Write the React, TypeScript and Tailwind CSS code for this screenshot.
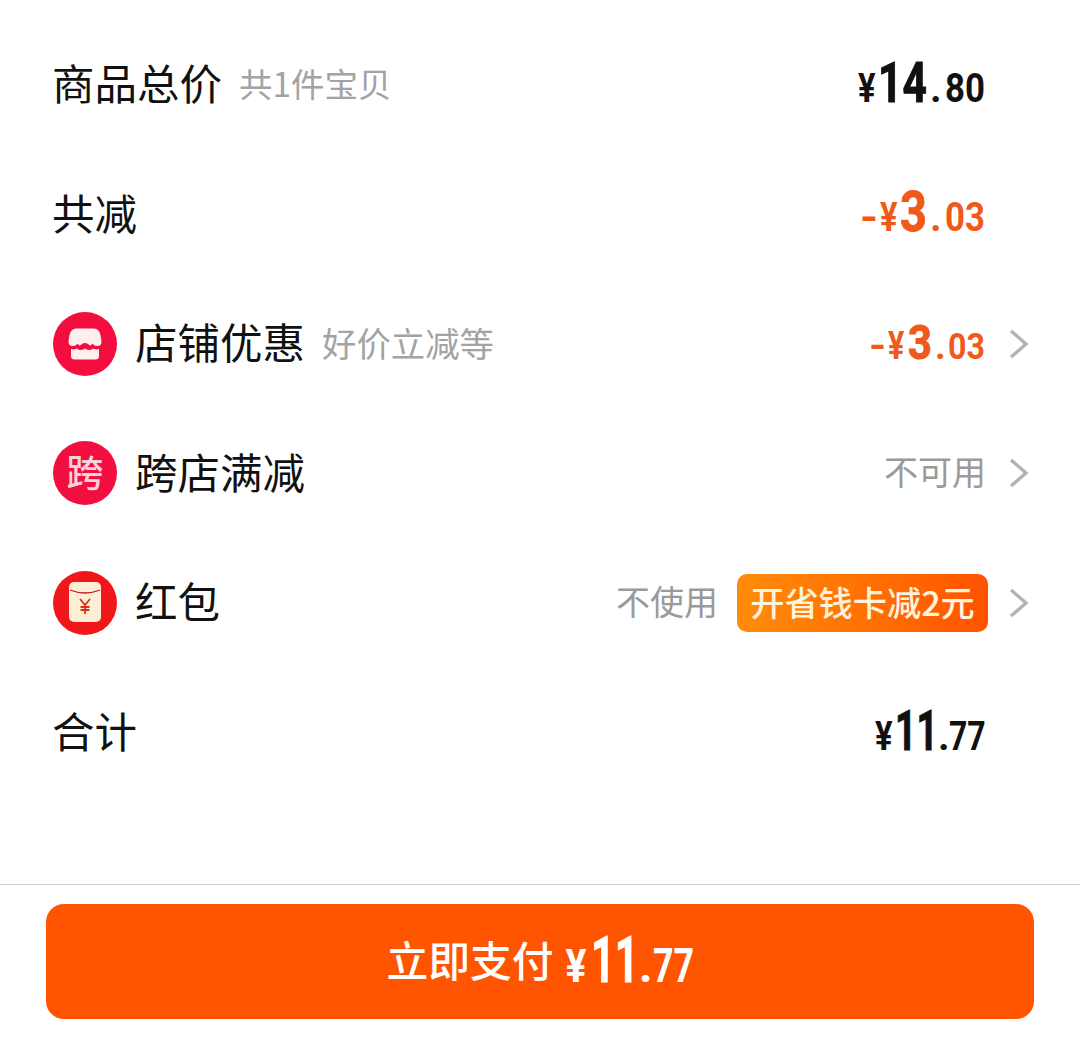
import type { ReactNode } from "react";

const CJK = "font-['Noto_Sans_CJK_SC','Noto_Sans',sans-serif]";
const NUM = "font-['Roboto',sans-serif]";

type Part = { text: string; cls: string };

// each glyph group sits in a fixed-width slot and gets squeezed, the app uses a condensed numeric face
function Price({ parts, color }: { parts: Part[]; color: string }) {
  return (
    <div className={`flex items-baseline pb-[3px] font-bold leading-none ${NUM} ${color}`}>
      {parts.map((part, index) => (
        <span key={index} className={`inline-block origin-left whitespace-nowrap ${part.cls}`}>
          {part.text}
        </span>
      ))}
    </div>
  );
}

const YEN = "w-[20px] text-[41px] scale-x-[0.8]";
const DOT = "w-[15px] text-[40px]";
const CENTS = "w-[40px] text-[40px] scale-x-[0.87]";
const HEAVY = "[-webkit-text-stroke:1px_currentColor]";

const TOTAL_PARTS: Part[] = [
  { text: "¥", cls: YEN },
  { text: "14", cls: `w-[52px] text-[56px] scale-x-[0.76] ${HEAVY}` },
  { text: ".", cls: DOT },
  { text: "80", cls: CENTS },
];

const CUT_PARTS: Part[] = [
  { text: "-", cls: "w-[20px] text-[40px] scale-x-[1.15]" },
  { text: "¥", cls: YEN },
  { text: "3", cls: `w-[30px] text-[55px] scale-x-[0.85] ${HEAVY}` },
  { text: ".", cls: DOT },
  { text: "03", cls: CENTS },
];

const SHOP_PARTS: Part[] = [
  { text: "-", cls: "w-[19px] text-[38px] scale-x-[1.15]" },
  { text: "¥", cls: "w-[20px] text-[38px] scale-x-[0.8]" },
  { text: "3", cls: `w-[27px] text-[49px] scale-x-[0.85] ${HEAVY}` },
  { text: ".", cls: "w-[13px] text-[37px]" },
  { text: "03", cls: "w-[38px] text-[37px] scale-x-[0.87]" },
];

const SUM_PARTS: Part[] = [
  { text: "¥", cls: YEN },
  { text: "11", cls: `w-[43px] text-[56px] scale-x-[0.67] ${HEAVY}` },
  { text: ".", cls: "w-[11px] text-[40px]" },
  { text: "77", cls: "w-[37px] text-[40px] scale-x-[0.8]" },
];

const PAY_PARTS: Part[] = [
  { text: "¥", cls: "w-[26px] text-[46px] scale-x-[0.85]" },
  { text: "11", cls: `w-[48px] text-[65px] scale-x-[0.64] ${HEAVY}` },
  { text: ".", cls: "w-[14px] text-[48px]" },
  { text: "77", cls: "w-[41px] text-[49px] scale-x-[0.73]" },
];

function Chevron() {
  return (
    <svg width="22" height="32" viewBox="0 0 22 32" fill="none" className="ml-[22px] shrink-0">
      <path d="M3 3 L18 16 L3 29" stroke="#b3b3b3" strokeWidth="3.4" />
    </svg>
  );
}

function ShopIcon() {
  return (
    <div className="flex h-16 w-16 shrink-0 items-center justify-center rounded-full bg-[#f20f3f]">
      <svg width="34" height="32" viewBox="0 0 34 32">
        <path d="M8 0.5 H26 Q31 0.5 32.5 7 L33.5 13 Q34 18 29 18 Q26 18 24.5 15.5 Q22.5 19 20 16 Q17 14 14 16 Q11.5 19 9.5 15.5 Q8 18 5 18 Q0 18 0.5 13 L1.5 7 Q3 0.5 8 0.5 Z" fill="#fdeef0" />
        <path d="M3 21 Q6 22 9 20.5 Q12 23.5 17 20.5 Q22 23.5 25 20.5 Q28 22 31 21 V28 Q31 31.5 27.5 31.5 H6.5 Q3 31.5 3 28 Z" fill="#fdeef0" />
      </svg>
    </div>
  );
}

function CrossStoreIcon() {
  return (
    <div className={`flex h-16 w-16 shrink-0 items-center justify-center rounded-full bg-[#f20f3f] pb-[3px] text-[37px] font-medium leading-none text-[#fbd0da] ${CJK}`}>跨</div>
  );
}

function RedPacketIcon() {
  return (
    <div className="flex h-16 w-16 shrink-0 items-center justify-center rounded-full bg-[#f0171b] pb-[2px]">
      <svg width="32" height="40" viewBox="0 0 32 40">
        <rect x="0" y="0" width="32" height="40" rx="5" fill="#fdeed6" />
        <path d="M1 8 Q16 14 31 8" stroke="#c8161b" strokeWidth="1.3" fill="none" />
        <path d="M11 17 L16 23 L21 17 M16 23 V32 M11.5 25 H20.5 M11.5 28 H20.5" stroke="#d8321f" strokeWidth="1.8" fill="none" />
      </svg>
    </div>
  );
}

function Row({ icon, title, sub, subClass = "", right }: { icon?: ReactNode; title: string; sub?: string; subClass?: string; right: ReactNode }) {
  return (
    <div className="flex h-[129.5px] items-center justify-between pl-[53px] pr-[50px]">
      <div className="flex items-center">
        {icon ? <div className="mr-[19px]">{icon}</div> : null}
        <span className="-ml-px pb-[5px] text-[42.5px] leading-none text-[#111]">{title}</span>
        {sub ? <span className={`ml-[17px] pb-[4px] leading-none text-[#a3a3a3] ${subClass}`}>{sub}</span> : null}
      </div>
      <div className="flex items-center">{right}</div>
    </div>
  );
}

export default function App() {
  return (
    <div className={`flex h-[1060px] w-[1080px] flex-col bg-white ${CJK}`}>
      <div className="flex-1 pt-5">
        <Row title="商品总价" sub="共1件宝贝" subClass="text-[33.5px]" right={<div className="mr-[45px]"><Price parts={TOTAL_PARTS} color="text-[#111]" /></div>} />
        <Row title="共减" right={<div className="mr-[45px]"><Price parts={CUT_PARTS} color="text-[#f0591a]" /></div>} />
        <Row
          icon={<ShopIcon />}
          title="店铺优惠"
          sub="好价立减等"
          subClass="text-[34.4px]"
          right={
            <>
              <Price parts={SHOP_PARTS} color="text-[#f0591a]" />
              <Chevron />
            </>
          }
        />
        <Row
          icon={<CrossStoreIcon />}
          title="跨店满减"
          right={
            <>
              <span className="pb-[4px] text-[34px] leading-none text-[#9a9a9a]">不可用</span>
              <Chevron />
            </>
          }
        />
        <Row
          icon={<RedPacketIcon />}
          title="红包"
          right={
            <>
              <span className="pb-[4px] text-[34px] leading-none text-[#9a9a9a]">不使用</span>
              <div className="ml-[19px] -mr-[2px] flex h-[58px] w-[251px] items-center justify-center rounded-[10px] bg-gradient-to-r from-[#ff8c0a] to-[#ff5200] pb-[4px] text-[34.2px] font-medium leading-none text-[#fff3dc]">开省钱卡减2元</div>
              <Chevron />
            </>
          }
        />
        <Row title="合计" right={<div className="mr-[44px]"><Price parts={SUM_PARTS} color="text-[#111]" /></div>} />
      </div>
      <div className="h-[176px] border-t border-[#cfcfcf] px-[46px] pt-[19px]">
        <button className="flex h-[115px] w-[988px] items-center justify-center rounded-[18px] bg-[#ff5500] text-white">
          <span className="mr-[11px] pb-[3px] text-[41.8px] font-medium leading-none">立即支付</span>
          <Price parts={PAY_PARTS} color="text-white" />
        </button>
      </div>
    </div>
  );
}
